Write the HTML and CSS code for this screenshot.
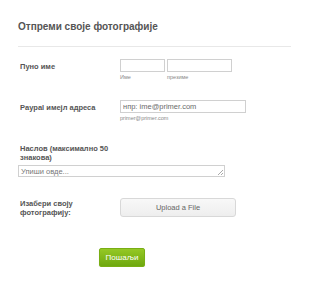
FILE: index.html
```html
<!DOCTYPE html>
<html lang="sr">
<head>
<meta charset="utf-8">
<title>Отпреми своје фотографије</title>
<link rel="stylesheet" href="styles.css">
</head>
<body>
<form class="form">
  <div class="header">
    <h2 class="title">Отпреми своје фотографије</h2>
    <div class="divider"></div>
  </div>

  <div class="row row-name">
    <label class="label">Пуно име</label>
    <div class="fields">
      <div class="sub">
        <input class="input input-first" type="text">
        <span class="sublabel">Име</span>
      </div>
      <div class="sub">
        <input class="input input-last" type="text">
        <span class="sublabel">презиме</span>
      </div>
    </div>
  </div>

  <div class="row row-email">
    <label class="label">Paypal имејл адреса</label>
    <div class="sub">
      <input class="input input-email" type="text" placeholder="нпр: ime@primer.com">
      <span class="sublabel">primer@primer.com</span>
    </div>
  </div>

  <div class="block row-title">
    <label class="label label-wrap">Наслов (максимално 50 знакова)</label>
    <div class="textarea-wrap">
      <textarea class="textarea" placeholder="Упиши овде..."></textarea>
      <span class="grip"></span>
    </div>
  </div>

  <div class="row row-upload">
    <label class="label label-upload">Изабери своју фотографију:</label>
    <button type="button" class="upload">Upload a File</button>
  </div>

  <div class="submit-row">
    <button type="button" class="submit">Пошаљи</button>
  </div>
</form>
</body>
</html>
```

FILE: styles.css
```css
* { box-sizing: border-box; }
html, body { margin: 0; padding: 0; background: #fff; }
body { font-family: "Liberation Sans", Arial, sans-serif; color: #555; }

.form { padding-left: 18px; width: 310px; }

.header { padding-top: 21px; }
.title {
  margin: 0;
  font-size: 10px;
  line-height: 12px;
  font-weight: bold;
  color: #555;
}
.divider {
  margin-top: 13px;
  width: 273px;
  height: 1px;
  background: #e8e8e8;
}

.row { display: flex; align-items: flex-start; }

.label {
  display: block;
  width: 102px;
  padding-left: 2px;
  font-size: 7.5px;
  line-height: 9px;
  font-weight: bold;
  color: #555;
}

.fields { display: flex; gap: 2px; }
.sub { display: flex; flex-direction: column; }

.input {
  height: 13px;
  border: 1px solid #d0d0d0;
  background: #fff;
  margin: 0;
  padding: 0 2px;
  font-family: "Liberation Sans", Arial, sans-serif;
  font-size: 7.5px;
  color: #555;
  outline: none;
}
.input::placeholder { color: #6b6b6b; }
.input-first { width: 45px; }
.input-last { width: 65px; }
.input-email { width: 126px; }

.sublabel {
  margin-top: 2px;
  font-size: 5.5px;
  line-height: 7px;
  color: #888;
}

.row-name { margin-top: 12px; }
.row-name .label { padding-top: 3px; }

.row-email { margin-top: 19px; }
.row-email .label { padding-top: 3px; }

.row-title { margin-top: 22px; }
.label-wrap { width: 96px; }
.textarea-wrap { position: relative; width: 207px; margin-top: 3px; }
.textarea {
  display: block;
  width: 207px;
  height: 12px;
  border: 1px solid #d0d0d0;
  padding: 1px 2px 0;
  font-family: "Liberation Sans", Arial, sans-serif;
  font-size: 7.5px;
  line-height: 9px;
  color: #555;
  overflow: hidden;
  resize: none;
  outline: none;
}
.textarea::placeholder { color: #777; }
.grip {
  position: absolute;
  right: 2px;
  bottom: 2px;
  width: 5px;
  height: 5px;
  background:
    linear-gradient(135deg, transparent 45%, #aaa 45%, #aaa 57%, transparent 57%, transparent 75%, #aaa 75%, #aaa 87%, transparent 87%);
}

.row-upload { margin-top: 21px; }
.label-upload { padding-top: 1px; width: 102px; padding-right: 40px; }

.upload {
  width: 116px;
  height: 19px;
  margin: 0;
  border: 1px solid #d8d8d8;
  border-radius: 3px;
  background: linear-gradient(#f8f8f8, #eeeeee);
  font-family: "Liberation Sans", Arial, sans-serif;
  font-size: 7.5px;
  color: #666;
  padding: 0;
}

.submit-row { margin-top: 29px; padding-left: 81px; }
.submit {
  width: 46px;
  height: 19px;
  margin: 0;
  padding: 0;
  border: 1px solid #79ae14;
  border-radius: 2px;
  background: linear-gradient(#95c825, #6ea80f);
  font-family: "Liberation Sans", Arial, sans-serif;
  font-size: 8px;
  color: #fff;
  box-shadow: 0 1px 1px rgba(0,0,0,0.15);
}
```
